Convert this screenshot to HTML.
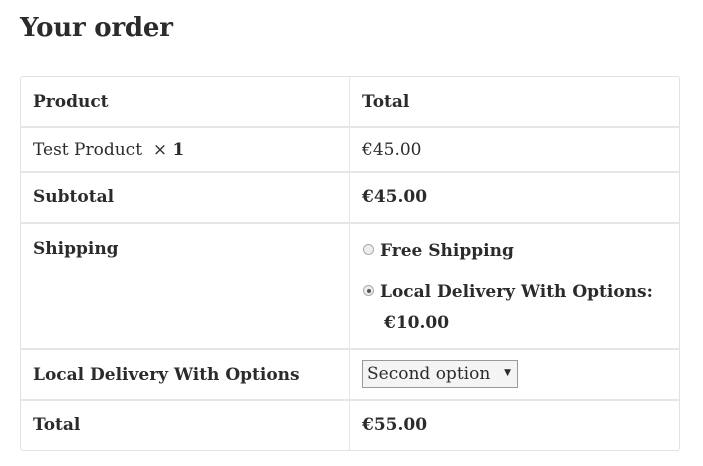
<!DOCTYPE html>
<html><head><style>
body{margin:0;width:703px;height:466px;background:#fff;font-family:"DejaVu Serif","Liberation Serif",serif;color:#2b2b2b;position:relative;overflow:hidden}
h2{position:absolute;left:20px;top:13px;margin:0;font-size:26px;font-weight:bold;letter-spacing:-0.2px}
.t{position:absolute;left:20px;top:76px;width:658px;height:373px;border:1px solid #e2e2e2;border-radius:3px}
.h{position:absolute;left:0;width:658px;height:0;border-top:2px solid #e6e6e6}
.v{position:absolute;left:328px;top:0;height:373px;border-left:1px solid #e6e6e6}
.c{position:absolute;font-size:17px;white-space:nowrap;margin-top:1px}
b{font-weight:bold}
.r{display:inline-block;width:9px;height:9px;border:1px solid #aaa;border-radius:50%;background:#eee;vertical-align:1px;margin-right:6px;position:relative}
.r.on:after{content:"";position:absolute;left:2.5px;top:2.5px;width:4px;height:4px;border-radius:50%;background:#555}
.sel{position:absolute;left:341px;top:283px;width:156px;height:28px;border:1px solid #999;background:#f4f4f4;box-sizing:border-box;font-size:17px;padding:3px 0 0 4px}
.sel span{position:absolute;right:6px;top:7px;font-size:9px}
</style></head><body>
<h2>Your order</h2>
<div class="t">
<div class="h" style="top:49px"></div>
<div class="h" style="top:94px"></div>
<div class="h" style="top:145px"></div>
<div class="h" style="top:271px"></div>
<div class="h" style="top:322px"></div>
<div class="v"></div>
<div class="c" style="left:12px;top:14px"><b>Product</b></div>
<div class="c" style="left:341px;top:14px"><b>Total</b></div>
<div class="c" style="left:12px;top:62px">Test Product&nbsp; × <b>1</b></div>
<div class="c" style="left:341px;top:62px">€45.00</div>
<div class="c" style="left:12px;top:109px"><b>Subtotal</b></div>
<div class="c" style="left:341px;top:109px"><b>€45.00</b></div>
<div class="c" style="left:12px;top:161px"><b>Shipping</b></div>
<div class="c" style="left:342px;top:163px"><span class="r"></span><b>Free Shipping</b></div>
<div class="c" style="left:342px;top:204px"><span class="r on"></span><b>Local Delivery With Options:</b></div>
<div class="c" style="left:363px;top:235px"><b>€10.00</b></div>
<div class="c" style="left:12px;top:287px"><b>Local Delivery With Options</b></div>
<div class="sel">Second option<span>▼</span></div>
<div class="c" style="left:12px;top:337px"><b>Total</b></div>
<div class="c" style="left:341px;top:337px"><b>€55.00</b></div>
</div>
</body></html>
